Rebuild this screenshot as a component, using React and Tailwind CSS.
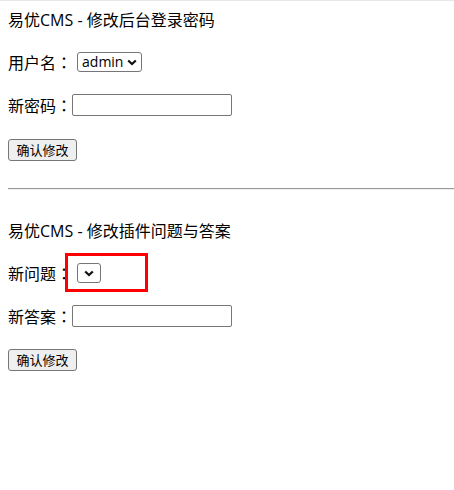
import React from 'react'

const font = { fontFamily: '"Open Sans", "Noto Sans CJK SC", sans-serif' }

function Chevron() {
  return (
    <svg width="10" height="7" viewBox="0 0 10 7" className="shrink-0">
      <path d="M1.2 1.5l3.8 3.6 3.8-3.6" fill="none" stroke="#111" strokeWidth="2.2" />
    </svg>
  )
}

function FakeSelect({ value }) {
  return (
    <div className={'ml-[5px] h-[20px] flex items-center border border-[#767676] rounded-[3px] bg-white ' + (value ? 'pl-[4px] pr-[4px] gap-[4px]' : 'w-[24px] justify-center')}>
      {value && <span className="text-[14px] leading-none text-black">{value}</span>}
      <Chevron />
    </div>
  )
}

function TextInput() {
  return <input type="text" className="w-[160px] h-[22px] border border-[#767676] rounded-[2px] bg-white px-1 outline-none" />
}

function SubmitButton() {
  return (
    <button className="w-[69px] h-[22px] border border-[#767676] rounded-[3px] bg-[#efefef] text-[13px] leading-none text-black">
      确认修改
    </button>
  )
}

function Row({ children, className = '' }) {
  return <div className={'h-[22px] flex items-center whitespace-nowrap ' + className}>{children}</div>
}

// 冒号用繁体字体，居中显示
function Label({ text }) {
  return (
    <span className="shrink-0 whitespace-nowrap">
      {text}
      <span style={{ fontFamily: '"Noto Sans CJK TC", sans-serif' }}>：</span>
    </span>
  )
}

export default function App() {
  return (
    <div className="min-h-screen bg-white text-black text-[16px]" style={font}>
      <div className="h-px bg-[#e5e7eb]" />
      <div className="pl-2 pt-[8px]">
        {/* 登录密码 */}
        <Row>易优CMS - 修改后台登录密码</Row>
        <Row className="mt-[20px]">
          <Label text="用户名" />
          <FakeSelect value="admin" />
        </Row>
        <Row className="mt-[21px]">
          <Label text="新密码" />
          <TextInput />
        </Row>
        <Row className="mt-[23px]">
          <SubmitButton />
        </Row>
      </div>

      <div className="ml-2 mt-[27px] h-[2px] border-t border-t-[#9a9a9a] border-b border-b-[#eeeeee]" />

      <div className="pl-2 pt-[30px]">
        {/* 插件问题 */}
        <Row>易优CMS - 修改插件问题与答案</Row>
        <Row className="mt-[20px] relative">
          <Label text="新问题" />
          <FakeSelect />
          <div className="absolute left-[57px] top-[-9px] w-[83px] h-[39px] border-[3px] border-[#ff0000]" />
        </Row>
        <Row className="mt-[21px]">
          <Label text="新答案" />
          <TextInput />
        </Row>
        <Row className="mt-[22px]">
          <SubmitButton />
        </Row>
      </div>
    </div>
  )
}
